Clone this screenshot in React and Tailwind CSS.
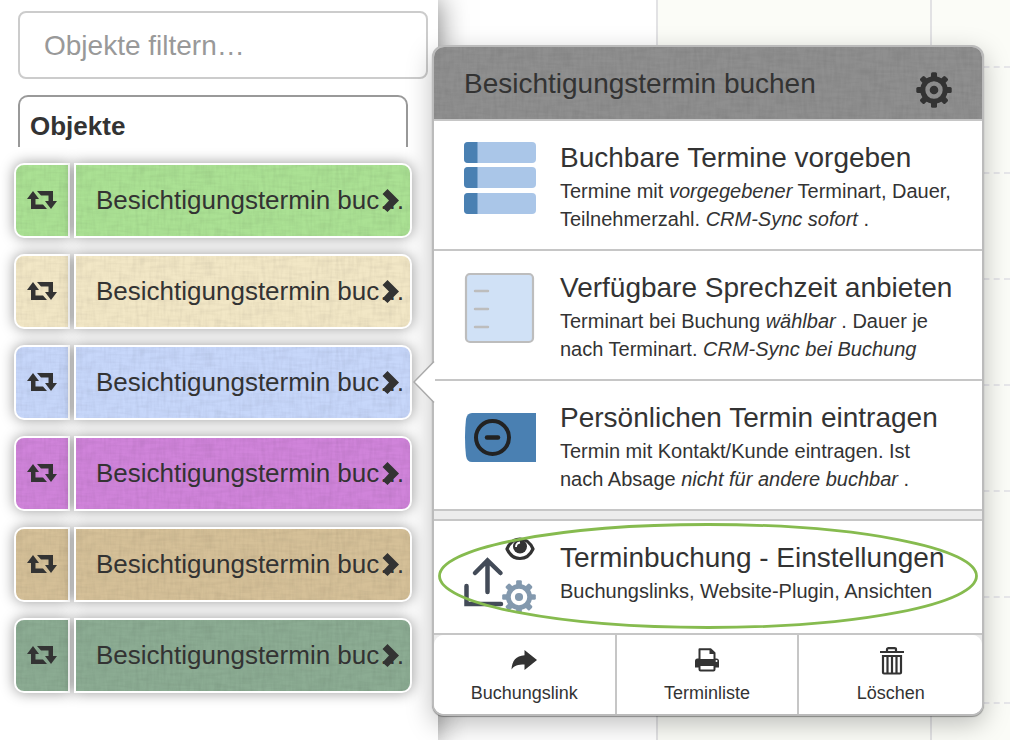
const BOOKING_TITLE = 'Besichtigungstermin buchen';
const BOOKING_TITLE_SHORT = 'Besichtigungstermin buc…';

const objects = [
  { id: 'green', color: 'bg-[#abe194]' },
  { id: 'cream', color: 'bg-[#f2e7c6]' },
  { id: 'blue', color: 'bg-[#c7d7fa]' },
  { id: 'violet', color: 'bg-[#d084da]' },
  { id: 'tan', color: 'bg-[#d5c098]' },
  { id: 'teal', color: 'bg-[#8cac93]' },
];

function Linen() {
  return (
    <svg className="pointer-events-none absolute inset-0 h-full w-full" aria-hidden="true">
      <defs>
        <filter id="linen-h" x="0" y="0" width="100%" height="100%">
          <feTurbulence type="fractalNoise" baseFrequency="0.05 0.3" numOctaves="2" seed="3" />
          <feColorMatrix values="0 0 0 0 0  0 0 0 0 0  0 0 0 0 0  1.6 0 0 0 -0.6" />
        </filter>
        <filter id="linen-v" x="0" y="0" width="100%" height="100%">
          <feTurbulence type="fractalNoise" baseFrequency="0.3 0.05" numOctaves="2" seed="8" />
          <feColorMatrix values="0 0 0 0 0  0 0 0 0 0  0 0 0 0 0  1.6 0 0 0 -0.6" />
        </filter>
      </defs>
      <rect width="100%" height="100%" filter="url(#linen-h)" opacity="0.05" />
      <rect width="100%" height="100%" filter="url(#linen-v)" opacity="0.05" />
    </svg>
  );
}

function RetweetIcon() {
  return (
    <svg width="30" height="20" viewBox="0 0 30 20" fill="#333" aria-hidden="true">
      <path d="M6 0 12 8H8.500V13.500H16L20 18H4V8H0Z" />
      <path d="M10 0H26V10H30L24 18 18 10H21.500V4.500H14Z" />
    </svg>
  );
}

function ChevronIcon() {
  return (
    <svg width="18" height="24" viewBox="0 0 18 24" fill="#333" aria-hidden="true">
      <path d="M0.500 5 5.500 0 17 11.500 5.500 23 0.500 18.500 7 11.500Z" />
    </svg>
  );
}

const TEETH = [0, 45, 90, 135, 180, 225, 270, 315];

function GearShape({ cx, cy, scale = 1, color }) {
  return (
    <g transform={`translate(${cx} ${cy}) scale(${scale})`} fill={color}>
      {TEETH.map((angle) => (
        <rect key={angle} x="-3" y="-17.700" width="6" height="7" rx="1.500" transform={`rotate(${angle})`} />
      ))}
      <circle r="11.200" fill="none" stroke={color} strokeWidth="5" />
      <circle r="4.300" />
    </g>
  );
}

function SlotsIcon() {
  return (
    <svg width="72" height="73" viewBox="0 -1 72 73" aria-hidden="true">
      {[0, 25, 51].map((y) => (
        <g key={y}>
          <rect y={y} width="72" height="21" rx="4" fill="#aac6e8" />
          <path d={`M13.500 ${y}H4Q0 ${y} 0 ${y + 4}V${y + 17}Q0 ${y + 21} 4 ${y + 21}H13.500Z`} fill="#4a80b2" />
        </g>
      ))}
    </svg>
  );
}

function SheetIcon() {
  return (
    <svg width="72" height="73" viewBox="0 -1 72 73" aria-hidden="true">
      <rect x="2" y="2" width="67" height="68" rx="4" fill="#d0e1f6" stroke="#bdbdbd" strokeWidth="2.200" />
      <path d="M11 19H24M11 37H24M11 55H24" stroke="#bdbdbd" strokeWidth="2.400" strokeLinecap="round" />
    </svg>
  );
}

function PersonalIcon() {
  return (
    <svg width="72" height="49" viewBox="0 0 72 49" aria-hidden="true">
      <path d="M72 0H8Q3 0 2 6Q0 24 2 43Q3 49 8 49H72Z" fill="#4a80b2" />
      <circle cx="28.500" cy="24.500" r="16.500" fill="none" stroke="#222" strokeWidth="4" />
      <path d="M23 24.500H34" stroke="#222" strokeWidth="4.500" strokeLinecap="round" />
    </svg>
  );
}

function SettingsIcon() {
  return (
    <svg width="74" height="76" viewBox="0 0 74 76" aria-hidden="true">
      <path
        d="M23.500 55V24M11 36 23.500 23.500 36.500 36M2.500 49V67H37"
        fill="none"
        stroke="#434b58"
        strokeWidth="4.500"
        strokeLinecap="round"
      />
      <path
        d="M43 12C46 5 51 2 56 2S66 5 69 12C66 18.500 61 21.500 56 21.500S46 18.500 43 12Z"
        fill="white"
        stroke="#333"
        strokeWidth="3.200"
        strokeLinejoin="round"
      />
      <circle cx="56" cy="9.500" r="7" fill="#333" />
      <path d="M52 10Q52 6 56 5.500" fill="none" stroke="white" strokeWidth="1.800" />
      <GearShape cx="55" cy="60" scale={0.95} color="#8399ae" />
    </svg>
  );
}

function ShareIcon() {
  return (
    <svg width="28" height="28" viewBox="0 0 28 28" fill="#333" aria-hidden="true">
      <path d="M14.500 3 27 13 14.500 23V17.500C8 17.500 4 18.500 1.500 22.500C2 14 6 8.800 14.500 8.300Z" />
    </svg>
  );
}

function PrintIcon() {
  return (
    <svg width="28" height="28" viewBox="0 1 28 28" aria-hidden="true">
      <path d="M2 15Q2 12.500 4.500 12.500H23.500Q26 12.500 26 15V21.500H2Z" fill="#333" />
      <path d="M6.500 14V3.200H17.500L21.500 7V14" fill="white" stroke="#333" strokeWidth="2" strokeLinejoin="round" />
      <path d="M16.500 3V8H22Z" fill="#333" />
      <rect x="5" y="13" width="18" height="4" fill="#333" />
      <rect x="6.500" y="19" width="15" height="5.500" rx="1" fill="white" stroke="#333" strokeWidth="2" />
      <circle cx="23.500" cy="15" r="1" fill="white" />
    </svg>
  );
}

function TrashIcon() {
  return (
    <svg width="28" height="28" viewBox="-1 1 28 28" fill="none" stroke="#333" aria-hidden="true">
      <path d="M2 6H26" strokeWidth="2.200" />
      <path d="M9 6V3.500Q9 2.200 10.500 2.200H16.500Q18 2.200 18 3.500V6" strokeWidth="2.200" />
      <path d="M5 10H23V26.500Q23 27.500 22 27.500H6Q5 27.500 5 26.500Z" strokeWidth="2.200" />
      <path d="M9.500 10V27M14 10V27M18.500 10V27" strokeWidth="2.200" />
    </svg>
  );
}

function ObjectRow({ color }) {
  return (
    <li className="flex h-[75px] gap-1">
      <button
        type="button"
        aria-label="Wiederholen"
        className={`relative flex w-14 shrink-0 items-center justify-center overflow-hidden rounded-l-[10px] border-2 border-white shadow-[0_0_14px_rgba(0,0,0,0.4)] ${color}`}
      >
        <Linen />
        <span className="relative">
          <RetweetIcon />
        </span>
      </button>
      <button
        type="button"
        className={`relative flex min-w-0 flex-1 items-center overflow-hidden rounded-r-[10px] border-2 border-white pl-5 text-left text-[26px] shadow-[0_0_14px_rgba(0,0,0,0.4)] ${color}`}
      >
        <Linen />
        <span className="relative whitespace-nowrap">{BOOKING_TITLE_SHORT}</span>
        <span className="absolute right-[10px]">
          <ChevronIcon />
        </span>
      </button>
    </li>
  );
}

function MenuItem({ icon, title, children, className = 'h-[130px]' }) {
  return (
    <button
      type="button"
      className={`flex w-full items-start border-b-2 border-[#c6c6c6] bg-white pt-5 pl-[30px] text-left ${className}`}
    >
      <span className="flex w-24 shrink-0">{icon}</span>
      <span className="min-w-0 whitespace-nowrap">
        <span className="block text-[28px] leading-[34px]">{title}</span>
        <span className="mt-[2px] block text-[20px] leading-7">{children}</span>
      </span>
    </button>
  );
}

function Action({ icon, label, className = '' }) {
  return (
    <button type="button" className={`flex flex-col items-center gap-1 bg-white pt-3 text-[18px] leading-7 ${className}`}>
      {icon}
      {label}
    </button>
  );
}

function DayColumn({ className }) {
  return (
    <div className={`border-l-2 border-[#e2e2e4] bg-[#fbfcf7] ${className}`}>
      <div className="h-[68px] border-b-2 border-dashed border-[#e7e7ea]" />
      {[1, 2, 3, 4, 5, 6].map((hour) => (
        <div key={hour} className="h-[106px] border-b-2 border-dashed border-[#e7e7ea]" />
      ))}
    </div>
  );
}

export default function App() {
  return (
    <div className="relative flex h-screen overflow-hidden bg-white font-['Liberation_Sans',Arial,sans-serif] text-[#333]">
      <aside className="relative z-10 w-[438px] shrink-0 bg-white shadow-[0_0_28px_rgba(0,0,0,0.55)]">
        <div className="pt-[11px] pr-[10px] pl-[18px]">
          <input
            type="text"
            aria-label="Objekte filtern"
            placeholder="Objekte filtern…"
            className="block h-[68px] w-full rounded-lg border-2 border-[#ccc] bg-white px-6 pt-[2px] text-[28px] placeholder:text-[#999]"
          />
        </div>
        <h2 className="mt-4 mr-[30px] ml-[18px] h-[52px] rounded-t-[10px] border-2 border-b-0 border-[#999] pt-3 pl-[10px] text-[26px] leading-[34px] font-bold">
          Objekte
        </h2>
        <ul className="mt-4 mr-[26px] ml-[14px] flex flex-col gap-4">
          {objects.map((object) => (
            <ObjectRow key={object.id} color={object.color} />
          ))}
        </ul>
      </aside>

      <main className="flex min-w-0 flex-1">
        <div className="w-[218px] shrink-0 bg-white" />
        <DayColumn className="w-[274px] shrink-0" />
        <DayColumn className="flex-1" />
      </main>

      <section
        aria-label={BOOKING_TITLE}
        className="absolute top-[45px] left-[432px] z-20 w-[552px] rounded-xl border-2 border-[#bbb] bg-[#ececec] shadow-[0_1px_1px_rgba(0,0,0,0.35),0_8px_26px_rgba(0,0,0,0.25)]"
      >
        <svg className="absolute top-[313px] -left-[21px]" width="22" height="44" viewBox="0 0 22 44" aria-hidden="true">
          <path d="M22 1 1 22 22 43Z" fill="white" />
          <path d="M21 1.500 1 22 21 42.500" fill="none" stroke="#aaa" strokeWidth="1.500" />
        </svg>
        <header className="relative flex h-[74px] items-center justify-between overflow-hidden rounded-t-[10px] border-b-2 border-[#c6c6c6] bg-[#8f8f8f] pt-[2px] pr-[28px] pl-[30px]">
          <Linen />
          <h1 className="relative text-[28px]">{BOOKING_TITLE}</h1>
          <button type="button" aria-label="Einstellungen" className="relative mt-3">
            <svg width="40" height="40" viewBox="0 0 40 40" aria-hidden="true">
              <GearShape cx="20" cy="20" color="#333" />
            </svg>
          </button>
        </header>

        <MenuItem icon={<SlotsIcon />} title="Buchbare Termine vorgeben">
          Termine mit <i>vorgegebener</i> Terminart, Dauer,
          <br />
          Teilnehmerzahl. <i>CRM-Sync sofort</i> .
        </MenuItem>
        <MenuItem icon={<SheetIcon />} title="Verfügbare Sprechzeit anbieten">
          Terminart bei Buchung <i>wählbar</i> . Dauer je
          <br />
          nach Terminart. <i>CRM-Sync bei Buchung</i>
        </MenuItem>
        <MenuItem
          icon={
            <span className="pt-3">
              <PersonalIcon />
            </span>
          }
          title="Persönlichen Termin eintragen"
        >
          Termin mit Kontakt/Kunde eintragen. Ist
          <br />
          nach Absage <i>nicht für andere buchbar</i> .
        </MenuItem>

        <div className="relative mt-2 border-t-2 border-[#c6c6c6]">
          <MenuItem
            icon={
              <span className="-mt-1">
                <SettingsIcon />
              </span>
            }
            title="Terminbuchung - Einstellungen"
            className="h-[114px]"
          >
            Buchungslinks, Website-Plugin, Ansichten
          </MenuItem>
          <svg
            className="pointer-events-none absolute inset-x-1 top-[2px] h-[106px] w-[541px]"
            viewBox="0 0 541 106"
            aria-hidden="true"
          >
            <ellipse cx="270" cy="53" rx="268.500" ry="51.500" fill="none" stroke="#86bb4f" strokeWidth="2.800" />
          </svg>
        </div>

        <div className="grid h-[79px] grid-cols-3 overflow-hidden rounded-[10px] bg-white">
          <Action icon={<ShareIcon />} label="Buchungslink" className="border-r-2 border-[#c6c6c6]" />
          <Action icon={<PrintIcon />} label="Terminliste" className="border-r-2 border-[#c6c6c6]" />
          <Action icon={<TrashIcon />} label="Löschen" />
        </div>
      </section>
    </div>
  );
}
